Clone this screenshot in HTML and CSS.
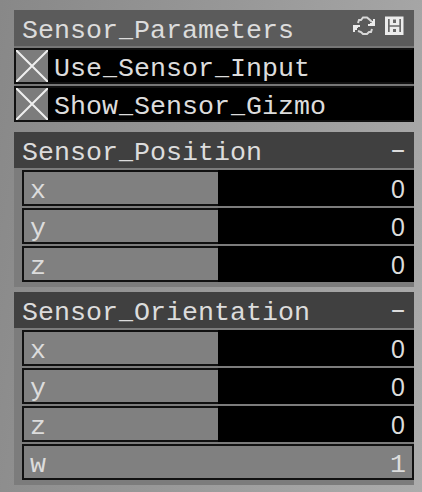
FILE: index.html
```
<!DOCTYPE html>
<html lang="en">
<head>
<meta charset="utf-8">
<title>Sensor Parameters</title>
<link rel="stylesheet" href="styles.css">
</head>
<body>
<main class="gui">
  <section class="panel">
    <header class="bar bar-main"><span class="label">Sensor<i>_</i>Parameters</span>
      <svg class="icons" width="52" height="22" viewBox="0 0 52 22">
        <path fill="none" stroke="#d8d8d8" stroke-width="2" d="M5 7L6 4H8L10 1.5H14L17 4L19 6M5 15L8 16L10 18H14L16 16H18L19 13"/>
        <path fill="#ececec" d="M22 3v7h-7V8h2V7h2V5h1V3zM0 16V9h7v2H5v1H4v2H2v2z"/>
        <path fill="#ececec" d="M32 0.5h18.500v18.500h-18.500z"/>
        <path fill="#686868" d="M35 3h1.700v6.300h9.600V3H48v13h-1.700v-5.300h-9.600V16H35zM40 3.500h3v3.500h-3zM40 13h3v3h-3z"/>
      </svg>
    </header>
    <div class="row"><svg class="check" width="32" height="32" viewBox="0 0 32 32"><path d="M0 0L32 32M32 0L0 32"/></svg><span class="label">Use<i>_</i>Sensor<i>_</i>Input</span></div>
    <div class="row"><svg class="check" width="32" height="32" viewBox="0 0 32 32"><path d="M0 0L32 32M32 0L0 32"/></svg><span class="label">Show<i>_</i>Sensor<i>_</i>Gizmo</span></div>
  </section>
  <section class="panel group">
    <header class="bar"><span class="label">Sensor<i>_</i>Position</span><span class="toggle">-</span></header>
    <div class="row slider"><span class="fill">x</span><span class="value">0</span></div>
    <div class="row slider"><span class="fill">y</span><span class="value">0</span></div>
    <div class="row slider"><span class="fill">z</span><span class="value">0</span></div>
  </section>
  <section class="panel group">
    <header class="bar"><span class="label">Sensor<i>_</i>Orientation</span><span class="toggle">-</span></header>
    <div class="row slider"><span class="fill">x</span><span class="value">0</span></div>
    <div class="row slider"><span class="fill">y</span><span class="value">0</span></div>
    <div class="row slider"><span class="fill">z</span><span class="value">0</span></div>
    <div class="row slider full"><span class="fill">w</span><span class="value one">1</span></div>
  </section>
</main>
</body>
</html>
```
FILE: styles.css
```
* { box-sizing: border-box; }
body {
  margin: 0;
  width: 422px;
  height: 492px;
  overflow: hidden;
  background: linear-gradient(100deg, #888 0%, #999 50%, #acacac 100%);
  color: #dcdcdc;
  font: 26.67px/42px "Liberation Mono", monospace;
}
.gui {
  display: flex;
  flex-direction: column;
  gap: 5px;
  padding: 10px 8px 0 14px;
}
.panel {
  display: flex;
  flex-direction: column;
  gap: 2px;
  background: #777;
}
.panel:first-child { margin-bottom: 5px; }
.group { padding-bottom: 5px; background: #7c7c7c; }
.bar, .row {
  display: flex;
  height: 36px;
  justify-content: space-between;
  overflow: hidden;
}
.bar { padding: 0 8px; background: #404040; }
.bar-main { background: #5b5b5b; }
.label i {
  display: inline-block;
  width: 16px;
  font-style: normal;
  line-height: 0;
  vertical-align: 2px;
  transform: scaleX(.88);
}
.toggle { line-height: 38px; transform: scaleX(1.6); }
.icons { margin: 6px 1px 0 0; flex: none; }
.row { background: #000; border: 2px solid #111; border-right-color: #000; }
.row .label { flex: 1; padding-left: 6px; line-height: 38px; }
.check { flex: none; background: #7c7c7c; }
.check path { stroke: #efefef; stroke-width: 2; }
.slider {
  margin-left: 8px;
  line-height: 38px;
  background: #000;
}
.slider:not(.full) { border-image: linear-gradient(90deg, #111 50%, #000 50%) 2; }
.fill { width: 194px; padding-left: 6px; background: #808080; }
.value {
  width: 16px;
  margin-right: 6px;
  text-align: center;
  font-family: "Liberation Sans", sans-serif;
  font-size: 25px;
  line-height: 34px;
}
.full { background: #808080; border-color: #111; }
.one { font-family: "Liberation Mono", monospace; font-size: 26.67px; line-height: 38px; }
```
